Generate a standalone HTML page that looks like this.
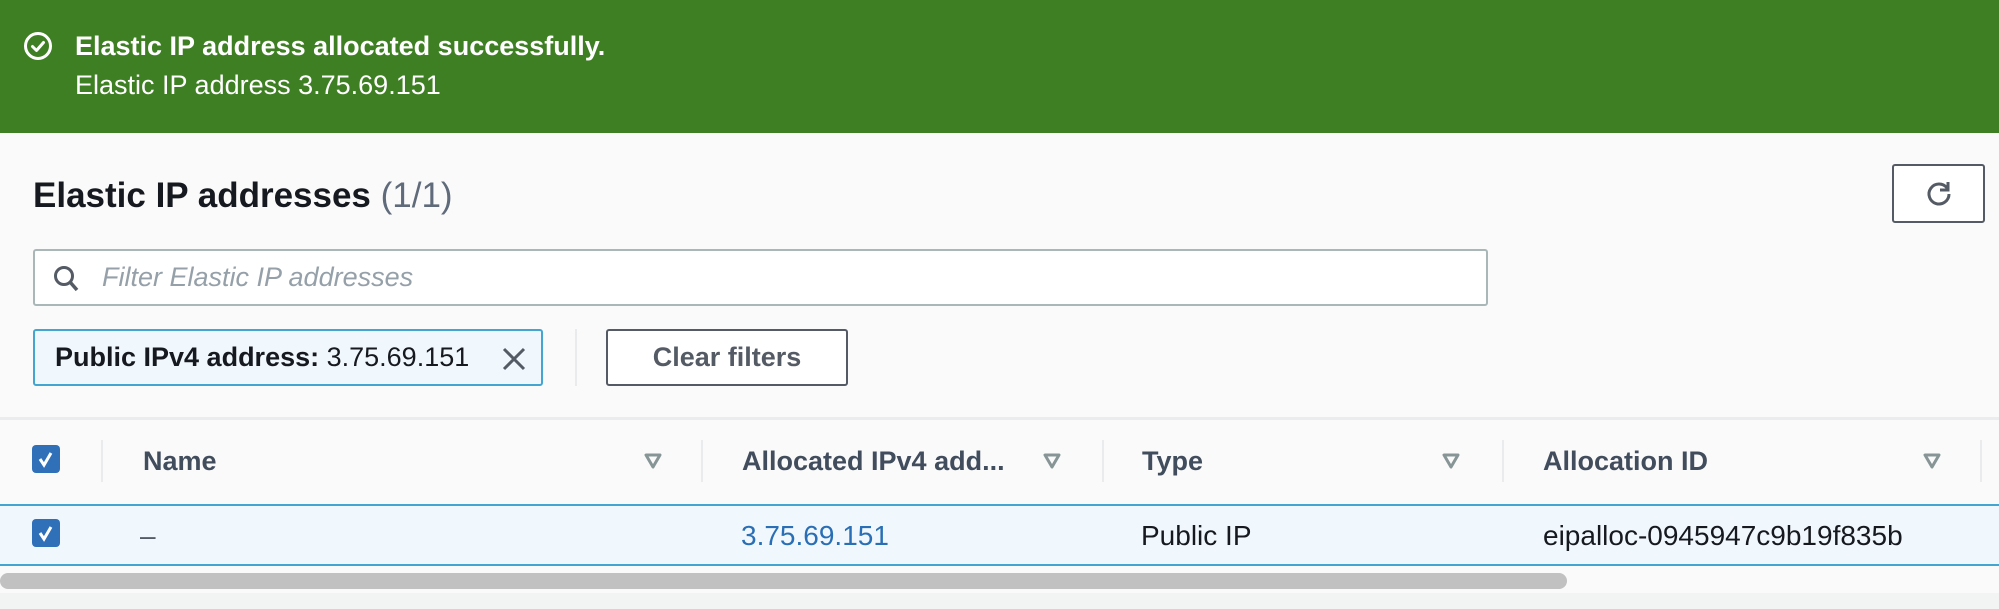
<!DOCTYPE html>
<html><head><meta charset="utf-8"><style>
*{box-sizing:border-box;margin:0;padding:0}
body{width:1999px;height:609px;overflow:hidden;background:#fafafa;font-family:"Liberation Sans",Arial,sans-serif;color:#16191f;position:relative}
.a{position:absolute}
.banner{left:0;top:0;width:1999px;height:133px;background:#3f7f23;color:#fff}
.t{white-space:nowrap}
.hdr{font-weight:bold;font-size:27px;color:#414d5c}
.sep{width:2px;background:#e9ebed;top:440px;height:42px}
.cb{width:28px;height:28px;background:#2f70b9;border-radius:4px}
</style></head><body>
<div class="a banner">
  <svg class="a" style="left:23px;top:31px" width="30" height="30" viewBox="0 0 30 30"><circle cx="15" cy="15" r="12.5" fill="none" stroke="#fff" stroke-width="3"/><path d="M9.5 15.5l4 4 7-8" fill="none" stroke="#fff" stroke-width="3" stroke-linecap="round" stroke-linejoin="round"/></svg>
  <div class="a t" style="left:75px;top:31px;font-size:27px;font-weight:bold">Elastic IP address allocated successfully.</div>
  <div class="a t" style="left:75px;top:70px;font-size:27px">Elastic IP address 3.75.69.151</div>
</div>
<div class="a t" style="left:33px;top:176px;font-size:35px;font-weight:bold">Elastic IP addresses <span style="font-weight:normal;color:#5f6b7a">(1/1)</span></div>
<div class="a" style="left:1892px;top:164px;width:93px;height:59px;border:2px solid #545b64;border-radius:3px;background:#fff">
  <svg class="a" style="left:30px;top:13px" width="30" height="30" viewBox="0 0 30 30"><path d="M23 9A10 10 0 1 0 25 15" fill="none" stroke="#545b64" stroke-width="3"/><path d="M24 3v8h-8" fill="none" stroke="#545b64" stroke-width="3"/></svg>
</div>
<div class="a" style="left:33px;top:249px;width:1455px;height:57px;border:2px solid #aab7b8;border-radius:3px;background:#fff">
  <svg class="a" style="left:18px;top:13px" width="28" height="30" viewBox="0 0 28 30"><circle cx="11" cy="12" r="8.5" fill="none" stroke="#545b64" stroke-width="3"/><path d="M17 18l7 8" stroke="#545b64" stroke-width="3.5"/></svg>
  <div class="a t" style="left:67px;top:11px;font-size:27px;font-style:italic;color:#95a0a8">Filter Elastic IP addresses</div>
</div>
<div class="a" style="left:33px;top:329px;width:510px;height:57px;border:2px solid #44a6d0;border-radius:3px;background:#f1f8fd">
  <div class="a t" style="left:20px;top:11px;font-size:27px"><b>Public IPv4 address:</b> 3.75.69.151</div>
  <svg class="a" style="left:466px;top:15px" width="26" height="26" viewBox="0 0 26 26"><path d="M3 3l20 20M23 3L3 23" stroke="#545b64" stroke-width="3"/></svg>
</div>
<div class="a" style="left:575px;top:329px;width:2px;height:57px;background:#e9ebed"></div>
<div class="a" style="left:606px;top:329px;width:242px;height:57px;border:2px solid #545b64;border-radius:3px;background:#fff;text-align:center;line-height:53px;font-size:27px;font-weight:bold;color:#545b64">Clear filters</div>
<div class="a" style="left:0;top:417px;width:1999px;height:3px;background:#eaeded"></div>
<div class="a cb" style="left:32px;top:445px"></div>
<svg class="a" style="left:32px;top:445px" width="28" height="28" viewBox="0 0 28 28"><path d="M8 14l4 6 7-12" fill="none" stroke="#fff" stroke-width="3"/></svg>
<div class="a sep" style="left:101px"></div>
<div class="a sep" style="left:701px"></div>
<div class="a sep" style="left:1102px"></div>
<div class="a sep" style="left:1502px"></div>
<div class="a sep" style="left:1980px"></div>
<div class="a t hdr" style="left:143px;top:446px">Name</div>
<div class="a t hdr" style="left:742px;top:446px">Allocated IPv4 add...</div>
<div class="a t hdr" style="left:1142px;top:446px">Type</div>
<div class="a t hdr" style="left:1543px;top:446px">Allocation ID</div>
<svg class="a" style="left:643px;top:452px" width="20" height="18" viewBox="0 0 20 18"><path d="M3 3h14L10 15z" fill="none" stroke="#879596" stroke-width="3" stroke-linejoin="round"/></svg>
<svg class="a" style="left:1042px;top:452px" width="20" height="18" viewBox="0 0 20 18"><path d="M3 3h14L10 15z" fill="none" stroke="#879596" stroke-width="3" stroke-linejoin="round"/></svg>
<svg class="a" style="left:1441px;top:452px" width="20" height="18" viewBox="0 0 20 18"><path d="M3 3h14L10 15z" fill="none" stroke="#879596" stroke-width="3" stroke-linejoin="round"/></svg>
<svg class="a" style="left:1922px;top:452px" width="20" height="18" viewBox="0 0 20 18"><path d="M3 3h14L10 15z" fill="none" stroke="#879596" stroke-width="3" stroke-linejoin="round"/></svg>
<div class="a" style="left:0;top:504px;width:1999px;height:62px;background:#f1f8fd;border-top:2px solid #44a6d0;border-bottom:2px solid #44a6d0"></div>
<div class="a cb" style="left:32px;top:519px"></div>
<svg class="a" style="left:32px;top:519px" width="28" height="28" viewBox="0 0 28 28"><path d="M8 14l4 6 7-12" fill="none" stroke="#fff" stroke-width="3"/></svg>
<div class="a t" style="left:140px;top:520px;font-size:28px;color:#545b64">–</div>
<div class="a t" style="left:741px;top:520px;font-size:28px;color:#2a6fb5">3.75.69.151</div>
<div class="a t" style="left:1141px;top:520px;font-size:28px">Public IP</div>
<div class="a t" style="left:1543px;top:520px;font-size:28px">eipalloc-0945947c9b19f835b</div>
<div class="a" style="left:0;top:573px;width:1567px;height:16px;background:#c1c1c1;border-radius:8px"></div>
<div class="a" style="left:0;top:593px;width:1999px;height:16px;background:#f2f3f3"></div>
</body></html>
